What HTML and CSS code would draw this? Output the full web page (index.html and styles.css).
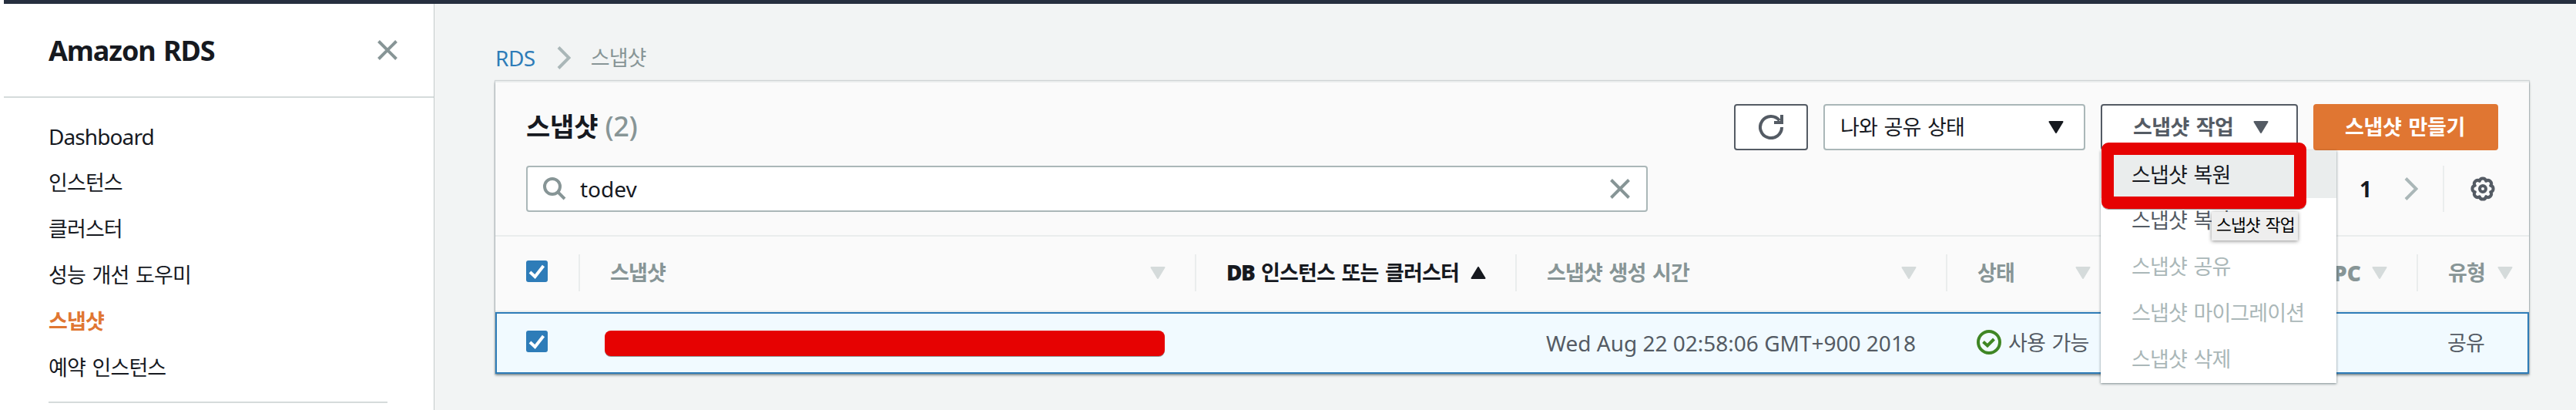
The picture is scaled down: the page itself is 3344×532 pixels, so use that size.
FILE: index.html
```html
<!DOCTYPE html>
<html lang="ko">
<head>
<meta charset="utf-8">
<title>Amazon RDS</title>
<link rel="stylesheet" href="styles.css">
</head>
<body>
<div class="topbar"></div>
<div class="app">
  <nav class="sidebar">
    <div class="side-head">
      <h1>Amazon RDS</h1>
      <svg class="close" width="26" height="26" viewBox="0 0 26 26"><path d="M1.5 1.5l23 23M24.5 1.5l-23 23"/></svg>
    </div>
    <ul class="side-list">
      <li class="latin">Dashboard</li>
      <li>인스턴스</li>
      <li>클러스터</li>
      <li>성능 개선 도우미</li>
      <li class="active">스냅샷</li>
      <li>예약 인스턴스</li>
    </ul>
    <div class="side-rule"></div>
  </nav>
  <main class="main">
    <div class="crumbs">
      <a class="latin">RDS</a>
      <svg class="chev" width="18" height="30" viewBox="0 0 18 30"><path d="M2 1.5L15.5 15 2 28.5"/></svg>
      <span>스냅샷</span>
    </div>
    <section class="panel">
      <div class="tools">
        <h2>스냅샷 <span class="count">(2)</span></h2>
        <div class="actions">
          <button class="btn refresh"><svg width="32" height="32" viewBox="0 0 32 32"><path d="M30 16A14 14 0 1 1 27 7.4"/><path d="M30 0v10H20"/></svg></button>
          <div class="btn select"><span>나와 공유 상태</span><svg class="tri dark" width="20" height="16" viewBox="0 0 20 16"><path d="M1.5 1h17L10 15z"/></svg></div>
          <div class="action-wrap">
            <button class="btn action"><span>스냅샷 작업</span><svg class="tri slate" width="20" height="16" viewBox="0 0 20 16"><path d="M1.5 1h17L10 15z"/></svg></button>
            <ul class="menu">
              <li class="hover">스냅샷 복원</li>
              <li>스냅샷 복사</li>
              <li class="off">스냅샷 공유</li>
              <li class="off">스냅샷 마이그레이션</li>
              <li class="off">스냅샷 삭제</li>
            </ul>
            <div class="frame"></div>
            <div class="tip">스냅샷 작업</div>
          </div>
          <button class="btn create"><span>스냅샷 만들기</span></button>
        </div>
      </div>
      <div class="filter">
        <div class="search">
          <svg width="30" height="30" viewBox="0 0 30 30"><circle cx="12" cy="12" r="10"/><path d="M19 19l9 9"/></svg>
          <span class="latin">todev</span>
          <svg class="close" width="26" height="26" viewBox="0 0 26 26"><path d="M1.5 1.5l23 23M24.5 1.5l-23 23"/></svg>
        </div>
        <div class="pager">
          <b class="latin">1</b>
          <svg class="chev" width="18" height="30" viewBox="0 0 18 30"><path d="M2 1.5L15.5 15 2 28.5"/></svg>
          <i></i>
          <svg class="gear" width="32" height="32" viewBox="0 0 32 32"><path d="M26.200 11.800A4.300 4.300 0 0 1 26.200 20.200A4.300 4.300 0 0 1 20.200 26.200A4.300 4.300 0 0 1 11.800 26.200A4.300 4.300 0 0 1 5.800 20.200A4.300 4.300 0 0 1 5.800 11.800A4.300 4.300 0 0 1 11.800 5.800A4.300 4.300 0 0 1 20.200 5.800A4.300 4.300 0 0 1 26.200 11.800z"/><circle cx="16" cy="16" r="4"/></svg>
        </div>
      </div>
      <div class="grid thead">
        <div class="cell"><svg class="box" width="28" height="28" viewBox="0 0 28 28"><rect width="28" height="28" rx="3"/><path d="M5 15l6.500 6L22.500 7"/></svg></div>
        <div class="cell sep"><span>스냅샷</span><svg class="tri pale" width="20" height="16" viewBox="0 0 20 16"><path d="M1.500 1h17L10 15z"/></svg></div>
        <div class="cell sep sorted"><span><b class="latin">DB</b> 인스턴스 또는 클러스터</span><svg class="tri dark" width="20" height="16" viewBox="0 0 20 16"><path d="M1.500 15h17L10 1z"/></svg></div>
        <div class="cell sep"><span>스냅샷 생성 시간</span><svg class="tri pale" width="20" height="16" viewBox="0 0 20 16"><path d="M1.500 1h17L10 15z"/></svg></div>
        <div class="cell sep"><span>상태</span><svg class="tri pale" width="20" height="16" viewBox="0 0 20 16"><path d="M1.500 1h17L10 15z"/></svg></div>
        <div class="cell vpc"><b class="latin">VPC</b><svg class="tri pale" width="20" height="16" viewBox="0 0 20 16"><path d="M1.500 1h17L10 15z"/></svg></div>
        <div class="cell sep"><span>유형</span><svg class="tri pale" width="20" height="16" viewBox="0 0 20 16"><path d="M1.500 1h17L10 15z"/></svg></div>
      </div>
      <div class="grid row">
        <div class="cell"><svg class="box" width="28" height="28" viewBox="0 0 28 28"><rect width="28" height="28" rx="3"/><path d="M5 15l6.500 6L22.500 7"/></svg></div>
        <div class="cell name"><div class="redact"></div></div>
        <div class="cell"></div>
        <div class="cell date latin">Wed Aug 22 02:58:06 GMT+900 2018</div>
        <div class="cell state"><svg width="32" height="32" viewBox="0 0 32 32"><circle cx="16" cy="16" r="14"/><path d="M8.500 15.500l5.500 5 8.500-8.500"/></svg><span>사용 가능</span></div>
        <div class="cell"></div>
        <div class="cell kind"><span>공유</span></div>
      </div>
    </section>
  </main>
</div>
</body>
</html>
```
FILE: styles.css
```css
* { box-sizing: border-box; }
body {
  margin: 0;
  padding-left: 5px;
  height: 532px;
  overflow: hidden;
  background: #fff;
  color: #16191f;
  font: 27px/40px "Noto Sans CJK KR", sans-serif;
  letter-spacing: -.9px;
  word-spacing: 2px;
  white-space: nowrap;
}
h1, h2, ul { margin: 0; padding: 0; list-style: none; }
svg { display: block; flex: none; fill: none; }
.latin { font-family: "Noto Sans", sans-serif; font-size: 28px; letter-spacing: 0; word-spacing: 0; }

.topbar { height: 5px; background: #262f3f; }
.app { display: flex; height: 527px; }

/* Sidebar */
.sidebar { width: 559px; border-right: 1px solid #c4cbcb; background: #fff; box-shadow: 1px 0 1px rgba(0, 28, 36, .1); }
.side-head {
  display: flex;
  justify-content: space-between;
  height: 122px;
  padding: 36px 47px 0 58px;
  border-bottom: 2px solid #d5dbdb;
}
.side-head h1 { font: bold 36px/50px "Noto Sans", sans-serif; letter-spacing: -1.1px; }
.side-head .close { margin-top: 11px; }
.close path { stroke: #879596; stroke-width: 4; }
.side-list { padding: 20px 0 0 58px; line-height: 57px; }
.side-list li { height: 60px; }
.side-list .latin { line-height: 60px; letter-spacing: -.9px; }
.side-list .active { color: #e07632; font-weight: 700; }
.side-rule { width: 440px; height: 2px; margin: 14px 0 0 58px; background: #d5dbdb; }

/* Content */
.main { flex: 1; padding: 50px 61px 0 79px; background: #f2f4f4; }
.crumbs { display: flex; align-items: center; height: 40px; margin-bottom: 10px; color: #879596; }
.crumbs a { color: #2e7cb8; margin-right: 28px; letter-spacing: -.5px; }
.crumbs .chev { margin-right: 26px; }
.crumbs span, .cell span, .btn span { padding-bottom: 3px; }
.chev path { stroke: #aab7b8; stroke-width: 4; }

.panel {
  position: relative;
  width: 2640px;
  border-top: 2px solid #eaeded;
  background: #fafafa;
  box-shadow: 0 2px 3px rgba(0, 28, 36, .45), 0 0 1px 1px rgba(0, 28, 36, .12);
}
.tools { display: flex; justify-content: space-between; height: 88px; padding: 28px 40px 0; }
.tools h2 { font-size: 34px; line-height: 56px; font-weight: 700; letter-spacing: -.2px; word-spacing: 0; }
.count { font: 500 36px/56px "Noto Sans", sans-serif; letter-spacing: -.5px; color: #879596; }
.actions { display: flex; gap: 20px; }
.btn {
  display: flex;
  align-items: center;
  height: 60px;
  margin: 0;
  border: 2px solid #545b64;
  border-radius: 4px;
  background: #fff;
  color: #545b64;
  font: 700 27px/50px "Noto Sans CJK KR", sans-serif;
  letter-spacing: -.6px;
  word-spacing: 2px;
}
.refresh { width: 96px; padding: 0 30px; }
.refresh path { stroke: #545b64; stroke-width: 4; }
.select { width: 340px; padding: 0 26px 0 20px; justify-content: space-between; border-color: #aab7b8; color: #16191f; font-weight: 400; letter-spacing: -.9px; }
.action { width: 256px; padding: 0 36px 0 40px; justify-content: space-between; }
.create { width: 240px; padding: 0 2px 0 0; justify-content: center; border-color: #e07632; background: #e07632; color: #fff; letter-spacing: -.4px; }
.tri path { stroke-width: 2; stroke-linejoin: round; }
.tri.dark path { fill: #16191f; stroke: #16191f; }
.tri.slate path { fill: #545b64; stroke: #545b64; }
.tri.pale path { fill: #d5dbdb; stroke: #d5dbdb; }

/* Open actions menu */
.action-wrap { position: relative; }
.menu {
  position: absolute;
  z-index: 2;
  top: 60px;
  left: 0;
  width: 306px;
  height: 302px;
  background: #fff;
  box-shadow: 0 1px 3px rgba(0, 28, 36, .5);
  color: #545b64;
}
.menu li { height: 60px; padding-left: 40px; line-height: 56px; }
.menu .hover { height: 62px; background: #eaeded; color: #16191f; line-height: 61px; }
.menu .off { color: #aab7b8; }
.frame {
  position: absolute;
  z-index: 3;
  top: 50px;
  left: 1px;
  width: 266px;
  height: 86px;
  border: 16px solid #e60202;
  border-radius: 9px;
  box-shadow: 0 1px 0 rgba(0, 0, 0, .4);
}
.tip {
  position: absolute;
  z-index: 4;
  top: 140px;
  left: 144px;
  width: 112px;
  height: 37px;
  padding-left: 6px;
  background: #eee;
  box-shadow: 0 1px 5px rgba(0, 0, 0, .45);
  color: #000;
  font-size: 21.5px;
  line-height: 32px;
}

.filter { display: flex; justify-content: space-between; height: 110px; padding: 20px 44px 0 40px; }
.search {
  display: flex;
  align-items: center;
  width: 1456px;
  height: 60px;
  padding: 0 21px 0 20px;
  border: 2px solid #aab7b8;
  border-radius: 4px;
  background: #fff;
}
.search circle, .search path { stroke: #879596; stroke-width: 4; }
.search span { flex: 1; margin-left: 18px; }
.pager { display: flex; align-items: center; height: 60px; }
.pager .chev { margin: 0 32px 0 42px; }
.pager i { width: 2px; height: 60px; margin-right: 34px; background: #eaeded; }
.gear path, .gear circle { stroke: #545b64; stroke-width: 4; stroke-linejoin: round; }

/* Table */
.grid { display: grid; grid-template-columns: 108px 800px 416px 559px 208px 403px 146px; }
.cell { display: flex; align-items: center; }
.cell:first-child { padding-left: 40px; }
.box { margin-bottom: 4px; }
.box rect { fill: #2e7cb8; }
.box path { stroke: #fff; stroke-width: 4; }
.thead { height: 100px; padding-bottom: 2px; border-top: 2px solid #eaeded; border-bottom: 2px solid #eaeded; color: #879596; font-weight: 700; }
.thead .sep {
  justify-content: space-between;
  padding: 0 38px 0 41px;
  background: linear-gradient(#eaeded, #eaeded) 0 50% / 2px 48px no-repeat;
}
.thead .sorted { color: #16191f; }
.thead .sorted .latin { letter-spacing: -1.5px; }
.thead .sep:nth-child(5) { padding-right: 20px; }
.thead .sep:last-child { padding-right: 21px; }
.vpc { justify-content: flex-end; gap: 14px; padding-right: 38px; }
.row { height: 80px; border: 2px solid #2e7cb8; background: #f1faff; color: #545b64; }
.row .cell:first-child { padding-left: 38px; }
.redact { width: 727px; height: 33px; margin-left: 32px; border-radius: 8px; background: #e60202; box-shadow: 0 1px 0 rgba(0, 0, 0, .4); }
.date { padding-left: 38px; }
.state { gap: 9px; padding-left: 38px; }
.state circle { stroke: #3f8624; stroke-width: 4; }
.state path { stroke: #3f8624; stroke-width: 4; }
.state svg { margin-bottom: 2px; }
.kind { padding-left: 38px; }
```
